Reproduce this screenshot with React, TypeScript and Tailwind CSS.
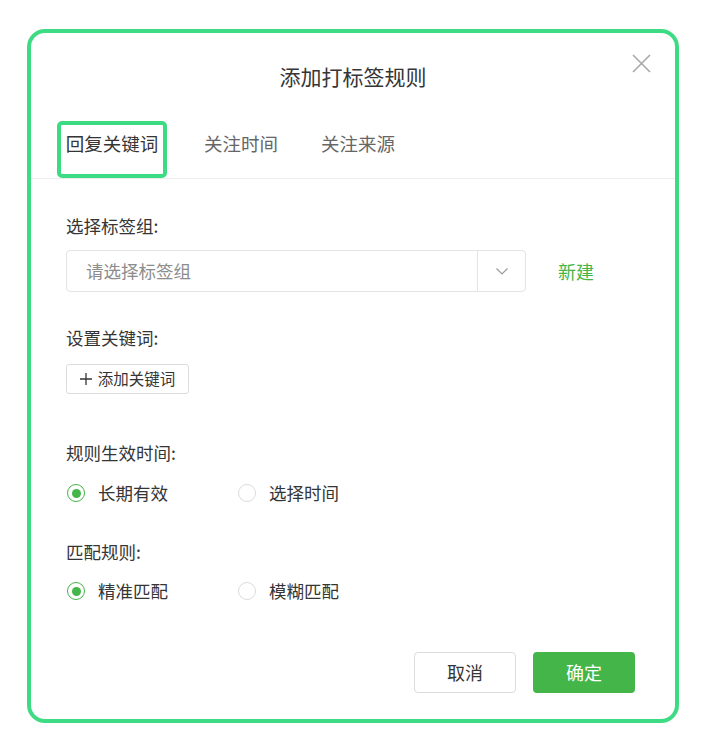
import React, { useState } from 'react';

const FONT = "font-['Noto_Sans_CJK_SC','Noto_Sans',sans-serif]";

interface RadioProps {
  checked: boolean;
  label: string;
  onClick: () => void;
  className?: string;
}

const Radio: React.FC<RadioProps> = ({ checked, label, onClick, className = '' }) => (
  <button onClick={onClick} className={`flex items-center h-[26px] ${className}`}>
    <span
      className={`w-[18px] h-[18px] rounded-full border-[1.5px] flex items-center justify-center ${
        checked ? 'border-[#44b549]' : 'border-[#dcdcdc]'
      }`}
    >
      {checked && <span className="w-[9px] h-[9px] rounded-full bg-[#44b549]" />}
    </span>
    <span className="ml-[13px] text-[17.5px] leading-[26px] text-[#353535]">{label}</span>
  </button>
);

const App: React.FC = () => {
  const [tab, setTab] = useState(0);
  const [period, setPeriod] = useState<'long' | 'time'>('long');
  const [match, setMatch] = useState<'exact' | 'fuzzy'>('exact');

  const tabs = ['回复关键词', '关注时间', '关注来源'];

  return (
    <div className={`min-h-[754px] bg-white pt-[29px] pl-[27px] ${FONT}`}>
      <div className="w-[652px] h-[694px] border-4 border-[#3ddc84] rounded-[18px] bg-white flex flex-col">
        {/* Header */}
        <div className="relative h-[88px] pt-[29px]">
          <h2 className="text-center text-[21px] leading-[28px] text-[#353535]">添加打标签规则</h2>
          <button className="absolute right-[24px] top-[21px] w-[19px] h-[19px]">
            <svg viewBox="0 0 19 19" className="w-[19px] h-[19px]" fill="none" stroke="#a8a8a8" strokeWidth="1.6">
              <path d="M1 1L18 18M18 1L1 18" />
            </svg>
          </button>
        </div>

        {/* Tabs */}
        <div className="flex items-start border-b border-[#ececec] pl-[26px]">
          {tabs.map((t, i) => (
            <button
              key={t}
              onClick={() => setTab(i)}
              className={`h-[57px] flex items-start text-[18.5px] leading-[26px] ${
                i === 0
                  ? 'w-[110px] border-4 border-[#3ddc84] rounded-[5px] pt-[5px] justify-center text-[#353535]'
                  : 'pt-[9px] text-[#666]'
              } ${i === 1 ? 'ml-[37px]' : ''} ${i === 2 ? 'ml-[43px]' : ''} ${tab === i && i !== 0 ? 'text-[#353535]' : ''}`}
            >
              <span>{t}</span>
            </button>
          ))}
        </div>

        {/* Body */}
        <div className="pl-[35px] pt-[34px] flex flex-col flex-1">
          <div className="text-[17.5px] leading-[26px] text-[#353535]">选择标签组:</div>
          <div className="mt-[11px] flex items-center">
            <div className="w-[460px] h-[42px] border border-[#e4e4e4] rounded-[4px] flex">
              <div className="flex-1 pl-[19px] flex items-center text-[17.5px] text-[#8c8c8c]">请选择标签组</div>
              <div className="w-[48px] border-l border-[#e4e4e4] flex items-center justify-center">
                <svg viewBox="0 0 12 7" className="w-[12px] h-[7px]" fill="none" stroke="#9a9a9a" strokeWidth="1.2">
                  <path d="M0.5 0.5L6 6L11.5 0.5" />
                </svg>
              </div>
            </div>
            <button className="ml-[32px] text-[18px] text-[#44b549]">新建</button>
          </div>

          <div className="mt-[33px] text-[17.5px] leading-[26px] text-[#353535]">设置关键词:</div>
          <div className="mt-[13px]">
            <button className="h-[30px] w-[123px] border border-[#dcdcdc] rounded-[3px] flex items-center justify-center text-[15.5px] text-[#353535]">
              <svg viewBox="0 0 12 12" className="w-[12px] h-[12px] mr-[6px]" fill="none" stroke="#353535" strokeWidth="1.3">
                <path d="M6 0V12M0 6H12" />
              </svg>
              添加关键词
            </button>
          </div>

          <div className="mt-[46px] text-[17.5px] leading-[26px] text-[#353535]">规则生效时间:</div>
          <div className="mt-[14px] flex pl-[1px]">
            <Radio checked={period === 'long'} label="长期有效" onClick={() => setPeriod('long')} className="w-[171px]" />
            <Radio checked={period === 'time'} label="选择时间" onClick={() => setPeriod('time')} />
          </div>

          <div className="mt-[33px] text-[17.5px] leading-[26px] text-[#353535]">匹配规则:</div>
          <div className="mt-[13px] flex pl-[1px]">
            <Radio checked={match === 'exact'} label="精准匹配" onClick={() => setMatch('exact')} className="w-[171px]" />
            <Radio checked={match === 'fuzzy'} label="模糊匹配" onClick={() => setMatch('fuzzy')} />
          </div>

          {/* Footer */}
          <div className="mt-[48px] flex justify-end pr-[40px] gap-[17px]">
            <button className="w-[102px] h-[41px] border border-[#dcdcdc] rounded-[4px] text-[18px] text-[#353535] bg-white">
              取消
            </button>
            <button className="w-[102px] h-[41px] rounded-[4px] text-[18px] text-white bg-[#44b549]">确定</button>
          </div>
        </div>
      </div>
    </div>
  );
};

export default App;
